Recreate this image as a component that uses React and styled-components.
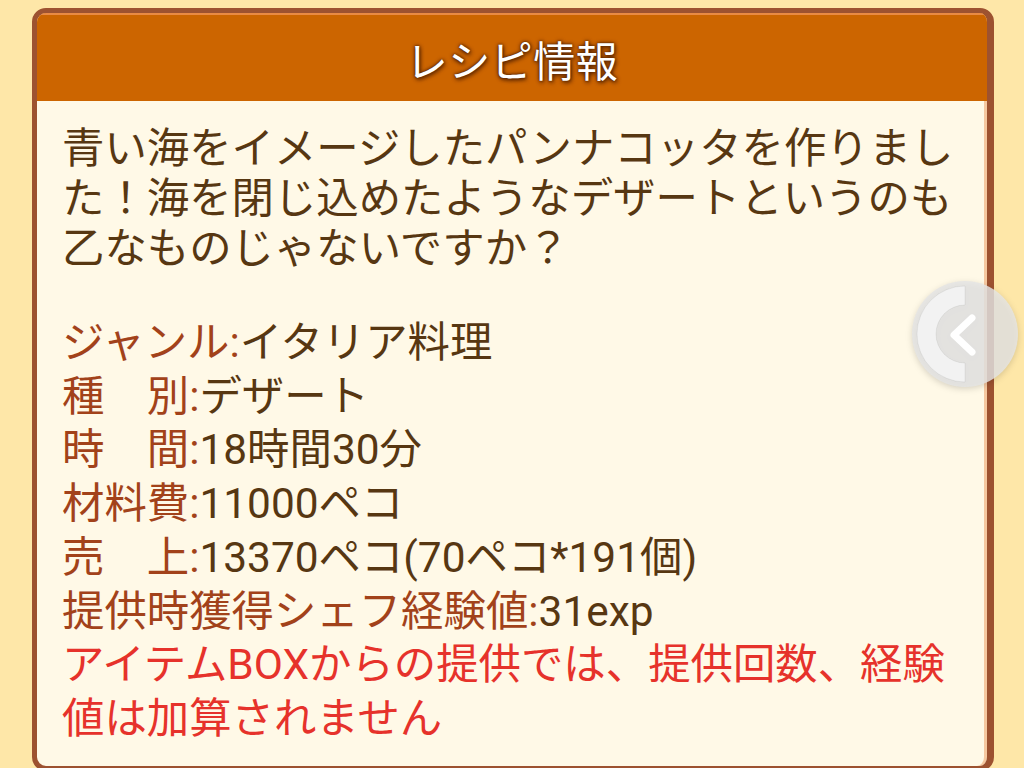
import React from 'react'
import styled, { createGlobalStyle } from 'styled-components'

/* ------------------------------ Global Styles ------------------------------ */
const GlobalStyle = createGlobalStyle`
  html, body {
    margin: 0;
    padding: 0;
    background: #fee7a8;
    font-family: Roboto, "Noto Sans CJK JP", sans-serif;
  }
`

/* --------------------------- Styled Components ---------------------------- */
const Page = styled.div`
  position: relative;
  width: 1024px;
  height: 768px;
  overflow: hidden;
  padding: 8px 30px 0 32px;
  box-sizing: border-box;
`

const Card = styled.section`
  border: 5px solid #9d5230;
  border-right-width: 7px;
  border-radius: 14px;
  background: #fff9e7;
  overflow: hidden;
  box-shadow: inset -3px 0 0 #f6c8a0;
`

const Header = styled.header`
  height: 88px;
  display: flex;
  align-items: center;
  justify-content: center;
  background: #cc6500;
  border-top: 2px solid #e98a44;
  box-sizing: border-box;
  color: #ffffff;
  font-size: 42px;
  letter-spacing: 0.5px;
  text-shadow: 0 0 2px #4e2000, 0 0 4px #5e2800, 1px 2px 4px #5e2800;
`

const Body = styled.div`
  padding: 23px 28px 20px 25px;
  font-size: 42.4px;
`

const Description = styled.p`
  margin: 0 0 42px;
  line-height: 50px;
  color: #573712;
`

const InfoList = styled.ul`
  list-style: none;
  margin: 0;
  padding: 0;
  line-height: 53.7px;
`

const InfoRow = styled.li`
  color: #573712;
  white-space: nowrap;
`

const Label = styled.span`
  color: #a2421a;
`

const Notice = styled.li`
  color: #e6322b;
`

const NavButton = styled.svg`
  position: absolute;
  left: 910px;
  top: 279px;
  width: 110px;
  height: 110px;
  filter: drop-shadow(0 2px 3px rgba(0, 0, 0, 0.18));
`

/* --------------------------------- Data ----------------------------------- */
const info = [
  { label: 'ジャンル', value: 'イタリア料理' },
  { label: '種　別', value: 'デザート' },
  { label: '時　間', value: '18時間30分' },
  { label: '材料費', value: '11000ペコ' },
  { label: '売　上', value: '13370ペコ(70ペコ*191個)' },
  { label: '提供時獲得シェフ経験値', value: '31exp' },
]

/* ------------------------------- Component -------------------------------- */
const App = () => (
  <Page>
    <GlobalStyle />
    <Card>
      <Header>レシピ情報</Header>
      <Body>
        <Description>
          青い海をイメージしたパンナコッタを作りました！海を閉じ込めたようなデザートというのも乙なものじゃないですか？
        </Description>
        <InfoList>
          {info.map((row, i) => (
            <InfoRow key={i}>
              <Label>{row.label}:</Label>
              {row.value}
            </InfoRow>
          ))}
          <Notice>アイテムBOXからの提供では、提供回数、経験値は加算されません</Notice>
        </InfoList>
      </Body>
    </Card>
    <NavButton viewBox="0 0 110 110">
      <circle cx="55" cy="55" r="53" fill="rgba(228,228,228,0.82)" />
      <path
        d="M55,7 A48,48 0 0 0 55,103 L55,84 A29,29 0 0 1 55,26 Z"
        fill="rgba(242,242,242,0.95)"
        stroke="rgba(0,0,0,0.06)"
        strokeWidth="1"
      />
      <path
        d="M62,39 L44,56 L62,73"
        fill="none"
        stroke="#ffffff"
        strokeWidth="7"
        strokeLinecap="round"
        strokeLinejoin="round"
      />
    </NavButton>
  </Page>
)

export default App
